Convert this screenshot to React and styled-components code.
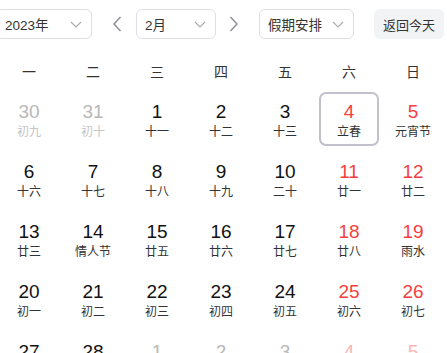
import React from 'react';
import styled, { createGlobalStyle } from 'styled-components';

const GlobalStyle = createGlobalStyle`
  body {
    margin: 0;
    background: #fff;
    overflow: hidden;
    font-family: "Liberation Sans", "Noto Sans CJK SC", sans-serif;
  }
`;

const Page = styled.div`
  width: 448px;
  margin-left: -3px;
`;

const Toolbar = styled.div`
  display: flex;
  align-items: center;
  height: 30px;
  padding-top: 9px;
  margin-left: -1px;
`;

const Select = styled.div`
  box-sizing: border-box;
  width: ${props => props.$width}px;
  height: 30px;
  border: 1px solid #dcdfe6;
  border-radius: 6px;
  display: flex;
  align-items: center;
  justify-content: space-between;
  padding: 0 9px 0 8px;
  font-size: 13.5px;
  color: #333;
  background: #fff;
`;

const NavButton = styled.div`
  width: 24px;
  height: 30px;
  display: flex;
  align-items: center;
  justify-content: center;
  margin: ${props => (props.$side === 'left' ? '0 7px 0 13px' : '0 13px 0 6px')};
`;

const TodayButton = styled.div`
  box-sizing: border-box;
  margin-left: 20px;
  width: 70px;
  height: 30px;
  border-radius: 6px;
  background: #f2f3f5;
  color: #333;
  font-size: 13px;
  display: flex;
  align-items: center;
  justify-content: center;
`;

const WeekRow = styled.div`
  display: grid;
  grid-template-columns: repeat(7, 64px);
  margin-top: 19px;
  height: 28px;
  line-height: 28px;
  text-align: center;
  font-size: 14px;
  color: #333;
`;

const Grid = styled.div`
  display: grid;
  grid-template-columns: repeat(7, 64px);
  grid-auto-rows: 60px;
  margin-top: 3px;
`;

const Cell = styled.div`
  display: flex;
  justify-content: center;
  align-items: flex-start;
  padding-top: 3px;
`;

const Day = styled.div`
  box-sizing: border-box;
  width: 60px;
  height: 54px;
  border: 2px solid ${props => (props.$selected ? '#c0c1cb' : 'transparent')};
  border-radius: 7px;
  display: flex;
  flex-direction: column;
  align-items: center;
  padding-top: 8px;
`;

const Num = styled.div`
  font-family: "Liberation Sans", Arial, sans-serif;
  font-size: 19px;
  line-height: 20px;
  color: ${props => props.$color};
`;

const Lunar = styled.div`
  font-family: "Noto Sans CJK SC", sans-serif;
  font-size: 12px;
  line-height: 18px;
  color: ${props => props.$color};
`;

const ChevronDown = () => (
  <svg width="12" height="7" viewBox="0 0 12 7">
    <path d="M1 1 L6 6 L11 1" fill="none" stroke="#a8abb2" strokeWidth="1.2" />
  </svg>
);

const Chevron = ({ dir }) => (
  <svg width="10" height="16" viewBox="0 0 10 16">
    <path
      d={dir === 'left' ? 'M8.5 1 L2 8 L8.5 15' : 'M1.5 1 L8 8 L1.5 15'}
      fill="none"
      stroke="#8f9199"
      strokeWidth="1.5"
    />
  </svg>
);

const weekdays = ['一', '二', '三', '四', '五', '六', '日'];

// [day, lunar, kind] kind: 'prev' | 'next' | undefined
const days = [
  [30, '初九', 'prev'], [31, '初十', 'prev'], [1, '十一'], [2, '十二'], [3, '十三'], [4, '立春'], [5, '元宵节'],
  [6, '十六'], [7, '十七'], [8, '十八'], [9, '十九'], [10, '二十'], [11, '廿一'], [12, '廿二'],
  [13, '廿三'], [14, '情人节'], [15, '廿五'], [16, '廿六'], [17, '廿七'], [18, '廿八'], [19, '雨水'],
  [20, '初一'], [21, '初二'], [22, '初三'], [23, '初四'], [24, '初五'], [25, '初六'], [26, '初七'],
  [27, '初八'], [28, '初九'], [1, '初十', 'next'], [2, '十一', 'next'], [3, '十二', 'next'], [4, '十三', 'next'], [5, '十四', 'next'],
];

function colors(kind, weekend) {
  if (kind) {
    return {
      num: weekend ? '#fbb5b5' : '#b8b8b8',
      lunar: weekend ? '#fbc5c5' : '#c4c4c4',
    };
  }
  return { num: weekend ? '#f53f3f' : '#111', lunar: '#333' };
}

export default function App() {
  return (
    <Page>
      <GlobalStyle />
      <Toolbar>
        <Select $width={96}>
          2023年
          <ChevronDown />
        </Select>
        <NavButton $side="left">
          <Chevron dir="left" />
        </NavButton>
        <Select $width={80}>
          2月
          <ChevronDown />
        </Select>
        <NavButton $side="right">
          <Chevron dir="right" />
        </NavButton>
        <Select $width={95}>
          假期安排
          <ChevronDown />
        </Select>
        <TodayButton>返回今天</TodayButton>
      </Toolbar>
      <WeekRow>
        {weekdays.map(w => (
          <div key={w}>{w}</div>
        ))}
      </WeekRow>
      <Grid>
        {days.map(([d, lunar, kind], i) => {
          const weekend = i % 7 >= 5;
          const c = colors(kind, weekend);
          return (
            <Cell key={i}>
              <Day $selected={i === 5}>
                <Num $color={c.num}>{d}</Num>
                <Lunar $color={c.lunar}>{lunar}</Lunar>
              </Day>
            </Cell>
          );
        })}
      </Grid>
    </Page>
  );
}
